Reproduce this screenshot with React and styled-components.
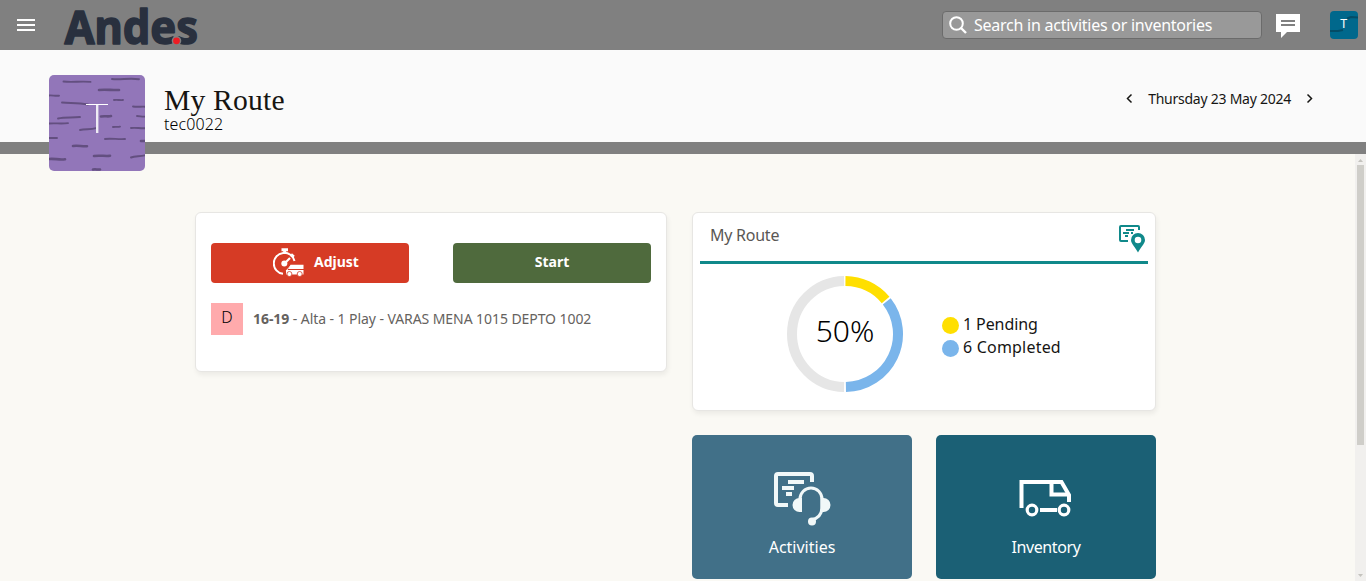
import React from 'react';
import styled, { createGlobalStyle } from 'styled-components';

const Global = createGlobalStyle`
  * { box-sizing: border-box; }
  html, body { margin: 0; padding: 0; overflow: hidden; }
  body { font-family: "Noto Sans", "Open Sans", sans-serif; color: #161513; }
  svg { display: block; flex: none; }
`;

const Page = styled.div`
  display: flex;
  flex-direction: column;
  height: 581px;
  background: #faf9f4;
`;

const Text = styled.span`
  display: block;
  white-space: nowrap;
  font-size: ${(p) => p.$size || 16}px;
  line-height: ${(p) => p.$line || 20}px;
  font-weight: ${(p) => p.$weight || 400};
  letter-spacing: ${(p) => p.$track || 0}px;
  color: ${(p) => p.$color || 'inherit'};
`;

const TopBar = styled.header`
  display: flex;
  align-items: center;
  flex: none;
  height: 50px;
  padding: 0 8px 0 17px;
  background: #808080;
`;

const Logo = styled.svg`
  margin-left: 28px;
  overflow: visible;
`;

const SearchBox = styled.div`
  display: flex;
  align-items: center;
  gap: 7px;
  width: 320px;
  height: 28px;
  margin-left: auto;
  padding-left: 6px;
  border: 1px solid #6b6b6b;
  border-radius: 4px;
  background: #999;
`;

const Chat = styled.svg`
  margin: 1px 30px 0 14px;
`;

const Header = styled.section`
  display: flex;
  flex: none;
  align-items: flex-start;
  height: 104px;
  padding: 25px 52px 0 49px;
  border-bottom: 12px solid #808080;
  background: #fafafa;
`;

const Titles = styled.div`
  margin-left: 19px;
  padding-top: 8px;
`;

const Title = styled.h1`
  margin: 0;
  font: 400 29.6px/34px "Liberation Serif", serif;
  letter-spacing: 0.2px;
  color: #161513;
  white-space: nowrap;
`;

const DateNav = styled.nav`
  display: flex;
  align-items: center;
  gap: 14px;
  margin: 14px 0 0 auto;
`;

const Body = styled.div`
  display: flex;
  flex: 1;
  min-height: 0;
`;

const Main = styled.main`
  display: flex;
  flex: 1;
  align-items: flex-start;
  gap: 25px;
  padding: 58px 0 0 195px;
`;

const Column = styled.div`
  display: flex;
  flex-direction: column;
  gap: 24px;
  width: ${(p) => p.$width}px;
`;

const Card = styled.section`
  height: ${(p) => p.$height}px;
  padding: ${(p) => p.$pad};
  border: 1px solid #e7e6e3;
  border-radius: 6px;
  background: #fff;
  box-shadow: 1px 3px 5px rgba(0, 0, 0, 0.06);
`;

const Actions = styled.div`
  display: flex;
  justify-content: space-between;
`;

const Button = styled.button`
  display: flex;
  align-items: center;
  justify-content: center;
  gap: 10px;
  width: 198px;
  height: 40px;
  padding: 0 0 2px ${(p) => p.$shift || 0}px;
  border: 0;
  border-radius: 4px;
  font-family: inherit;
  color: #fff;
  background: ${(p) => p.$bg};
`;

const ActivityRow = styled.div`
  display: flex;
  align-items: center;
  gap: 10px;
  margin-top: 20px;
`;

const Badge = styled.div`
  width: 32px;
  height: 32px;
  padding-top: 4px;
  text-align: center;
  background: #ffaaac;
`;

const CardHead = styled.div`
  display: flex;
  justify-content: space-between;
  height: 51px;
  padding: 12px 2px 0 10px;
  border-bottom: 3px solid #10898a;
`;

const ChartRow = styled.div`
  display: flex;
  align-items: center;
  gap: 38px;
  padding: 11px 0 0 86px;
`;

const Donut = styled.div`
  display: grid;
  place-items: center;
  width: 118px;
  height: 118px;
  & > * { grid-area: 1 / 1; }
`;

const Percent = styled(Text)`
  padding-bottom: 6px;
`;

const Legend = styled.div`
  display: flex;
  flex-direction: column;
  gap: 3px;
  padding-top: 2px;
`;

const LegendItem = styled.div`
  display: flex;
  align-items: center;
  gap: 4px;
  height: 20px;
`;

const Dot = styled.i`
  width: 17px;
  height: 17px;
  margin-top: 3px;
  border-radius: 50%;
  background: ${(p) => p.$color};
`;

const Tiles = styled.div`
  display: flex;
  gap: 24px;
`;

const Tile = styled.a`
  display: flex;
  flex-direction: column;
  align-items: center;
  width: 220px;
  height: 144px;
  padding-top: 32px;
  border-radius: 5px;
  background: ${(p) => p.$bg};
  color: #fff;
`;

const TileIcon = styled.svg`
  margin-bottom: 10px;
`;

const ScrollTrack = styled.div`
  display: flex;
  flex-direction: column;
  align-items: center;
  justify-content: space-between;
  width: 11px;
  padding: 5px 0 4px;
  background: #f1f0ee;
`;

const ScrollThumb = styled.div`
  width: 7px;
  height: 280px;
  margin: 3px 0 auto;
  background: #cfcec9;
`;

const barkMarks = [
  'M14.5 6.5c8 1 18-.5 27 .4', 'M63 4c8 .8 18-1 27 .2', 'M50 15c6-.8 14 .4 20 0', 'M0 20.5c3-.4 6 .6 10 .2',
  'M13 27.5c8 .8 16 0 26 2', 'M65 25c3-.6 6 .4 9 0', 'M84 31.5c4 .6 8 0 12 .2', 'M9 43.5c7-1.5 14-.6 22-1.5',
  'M52 41.5c4-.8 7 .4 10-.5', 'M88 41c3 0 5 1 8 .6', 'M0 48.5c6-.6 12 .5 19-.4', 'M31 55c5-1.4 10-.2 16-1.8',
  'M64 52c3-.4 5 .2 7-.4', 'M82 53c5-.6 9 .5 14 .2', 'M0 63h8', 'M56 64c6-1 13 .6 20 0', 'M24 71c5-.8 9 .6 14 .2',
  'M92 66h5', 'M0 84c5-.8 10 1.2 16 .3', 'M45 81c6-1 11 .5 16-.2', 'M82 82.5c4-1.6 9-.8 14-2.2', 'M44 94.5c3-.6 4 .3 7 0',
];
const thickMarks = [2, 8, 16, 17, 18, 19, 21];

function RouteAvatar() {
  return (
    <svg width="96" height="96" viewBox="0 0 96 96">
      <clipPath id="avatar"><rect width="96" height="96" rx="5" /></clipPath>
      <g clipPath="url(#avatar)">
        <rect width="96" height="96" fill="#9276b9" />
        {barkMarks.map((d, i) => (
          <path key={d} d={d} fill="none" stroke="#634f80" strokeWidth={thickMarks.includes(i) ? 2.6 : 1.9} strokeLinecap="round" />
        ))}
        <path d="M37 29.5h22" stroke="#fff" strokeWidth="1" />
        <path d="M48.2 30v28" stroke="#eeebf4" strokeWidth="2.4" />
      </g>
    </svg>
  );
}

function UserAvatar() {
  return (
    <svg width="28" height="28" viewBox="0 0 28 28">
      <clipPath id="user"><rect width="28" height="28" rx="4" /></clipPath>
      <g clipPath="url(#user)">
        <rect width="28" height="28" fill="#00688c" />
        <path d="M17 7.5l4-1.5 7 .5M0 20h8l5-1" fill="none" stroke="#044c66" strokeWidth="2" />
      </g>
      <text x="13.8" y="17" textAnchor="middle" fontFamily="Noto Sans, sans-serif" fontSize="12.5" fill="#fff">T</text>
    </svg>
  );
}

function AdjustIcon() {
  return (
    <svg width="31" height="29" viewBox="0 0 31 29" fill="none" stroke="#fff">
      <path d="M8.5 1.8h6.5M11.7 2v4M18 6.5l2.8 2.3" strokeWidth="3" />
      <path d="M10 25.8A10.5 10.5 0 1 1 21.5 13" strokeWidth="2" />
      <path d="M11 16l6-6" strokeWidth="2.2" />
      <circle cx="11.3" cy="15.5" r="3" fill="#fff" stroke="none" />
      <path d="M17.5 16.800h13v4.100h-15zM13 22h17.500v4.500H13z" fill="#fff" stroke="none" />
      <path d="M13.4 22.500l4.500-5" strokeWidth="1" />
      <circle cx="16.4" cy="26" r="2.5" fill="#fff" stroke="#d63b25" strokeWidth="0.8" />
      <circle cx="26.7" cy="26" r="2.5" fill="#fff" stroke="#d63b25" strokeWidth="0.8" />
    </svg>
  );
}

function RouteIcon() {
  return (
    <svg width="27" height="28" viewBox="0 0 27 28" fill="none" stroke="#10898a" strokeWidth="2">
      <path d="M20 5V2a1 1 0 0 0-1-1H2a1 1 0 0 0-1 1v13a1 1 0 0 0 1 1h7" />
      <path d="M7 5h8M4 8h6M12 8h2M6 11h3" />
      <path fillRule="evenodd" d="M19 8a7 7 0 0 1 7 7c0 3.8-4.5 7.2-7 12.6-2.5-5.4-7-8.8-7-12.6a7 7 0 0 1 7-7zm0 3.7a3.3 3.3 0 1 0 0 6.6 3.3 3.3 0 0 0 0-6.6z" fill="#10898a" stroke="none" />
    </svg>
  );
}

function ActivitiesIcon() {
  return (
    <TileIcon width="56" height="60" viewBox="0 0 56 60" overflow="visible" fill="none" stroke="#f1f8f8">
      <path d="M38 15V9a2 2 0 0 0-2-2H4a2 2 0 0 0-2 2v27a2 2 0 0 0 2 2h10" strokeWidth="4" />
      <path d="M14 15h16M8 21h12M12 27h6" strokeWidth="4" />
      <path d="M26 37V32a11 11 0 0 1 22 0v8c0 8-4.5 11.5-10.5 13" strokeWidth="3" />
      <path d="M28 31v14h-2.5a7 7 0 0 1 0-14zM46.5 31v14h3a7 7 0 0 0 0-14z" fill="#f1f8f8" stroke="none" />
      <circle cx="38" cy="54.500" r="4" fill="#f1f8f8" stroke="none" />
    </TileIcon>
  );
}

function TruckIcon() {
  return (
    <TileIcon width="54" height="60" viewBox="0 0 54 60" fill="none" stroke="#fff" strokeWidth="4">
      <path d="M2.5 41V15H42.5L50 28V35" />
      <path d="M32.5 15v12.5H48" />
      <path d="M21 43h17" />
      <circle cx="13" cy="43" r="4.8" strokeWidth="3.2" />
      <circle cx="45" cy="43" r="4.8" strokeWidth="3.2" />
    </TileIcon>
  );
}

const point = (r, deg) => {
  const a = ((deg - 90) * Math.PI) / 180;
  return `${59 + r * Math.cos(a)} ${59 + r * Math.sin(a)}`;
};
const arc = (from, to) => `M${point(53, from)}A53 53 0 0 1 ${point(53, to)}`;

function Chevron({ d }) {
  return <svg width="9" height="12" viewBox="0 0 9 12" fill="none" stroke="#161513" strokeWidth="1.5"><path d={d} /></svg>;
}

export default function App() {
  return (
    <Page>
      <Global />
      <TopBar>
        <svg width="18" height="12" viewBox="0 0 18 12" stroke="#fff" strokeWidth="2"><path d="M0 1h18M0 6h18M0 11h18" /></svg>
        <Logo width="137" height="50" viewBox="0 0 137 50">
          <text x="1.5" y="43.5" textLength="133.5" lengthAdjust="spacingAndGlyphs" fontFamily="Noto Sans, sans-serif" fontWeight="700" fontSize="46.5" fill="#29303e" stroke="#29303e" strokeWidth="1.6" strokeLinejoin="round">Andes</text>
          <circle cx="113.5" cy="40.8" r="4.8" fill="#808080" />
          <circle cx="113.5" cy="40.8" r="3.4" fill="#ed1c24" />
        </Logo>
        <SearchBox>
          <svg width="18" height="18" viewBox="0 0 18 18" fill="none" stroke="#fff" strokeWidth="2"><circle cx="7.5" cy="7.5" r="6.3" /><path d="M12 12l5 5" strokeWidth="2.4" /></svg>
          <Text $size={16} $track={-0.25} $color="#fff">Search in activities or inventories</Text>
        </SearchBox>
        <Chat width="24" height="24" viewBox="0 0 24 24"><path d="M0 0h24v18H11l-6 6v-6H0z" fill="#fff" /><path d="M5 7h14M5 11h14" stroke="#808080" strokeWidth="2" /></Chat>
        <UserAvatar />
      </TopBar>
      <Header>
        <RouteAvatar />
        <Titles>
          <Title>My Route</Title>
          <Text $size={16} $line={14} $track={0.1} $weight={300} $color="#000">tec0022</Text>
        </Titles>
        <DateNav>
          <Chevron d="M6.5 1.5L2.5 5.5L6.5 9.5" />
          <Text $size={14} $track={-0.25}>Thursday 23 May 2024</Text>
          <Chevron d="M2.5 1.5L6.5 5.5L2.5 9.5" />
        </DateNav>
      </Header>
      <Body>
        <Main>
          <Column $width={472}>
            <Card $height={160} $pad="30px 15px">
              <Actions>
                <Button $bg="#d63b25" $shift={12}><AdjustIcon /><Text $size={14} $weight={700}>Adjust</Text></Button>
                <Button $bg="#4f6a3d"><Text $size={14} $weight={700}>Start</Text></Button>
              </Actions>
              <ActivityRow>
                <Badge><Text $size={16} $weight={300} $color="#000">D</Text></Badge>
                <Text $size={14} $track={-0.07} $color="#65625e"><b>16-19</b> - Alta - 1 Play - VARAS MENA 1015 DEPTO 1002</Text>
              </ActivityRow>
            </Card>
          </Column>
          <Column $width={464}>
            <Card $height={199} $pad="0 7px">
              <CardHead><Text $size={16} $track={-0.25} $color="#5a5754">My Route</Text><RouteIcon /></CardHead>
              <ChartRow>
                <Donut>
                  <svg width="118" height="118" viewBox="0 0 118 118" fill="none" strokeWidth="10">
                    <path d={arc(181, 359)} stroke="#e6e6e6" />
                    <path d={arc(0.5, 50)} stroke="#ffdf00" />
                    <path d={arc(52, 179)} stroke="#7ab5eb" />
                  </svg>
                  <Percent $size={30} $line={34} $weight={300} $color="#000">50%</Percent>
                </Donut>
                <Legend>
                  <LegendItem><Dot $color="#ffdf00" /><Text $track={-0.1}>1 Pending</Text></LegendItem>
                  <LegendItem><Dot $color="#7ab5eb" /><Text $track={0.2}>6 Completed</Text></LegendItem>
                </Legend>
              </ChartRow>
            </Card>
            <Tiles>
              <Tile $bg="#417088"><ActivitiesIcon /><Text>Activities</Text></Tile>
              <Tile $bg="#1b6075"><TruckIcon /><Text $track={-0.4}>Inventory</Text></Tile>
            </Tiles>
          </Column>
        </Main>
        <ScrollTrack>
          <svg width="5" height="3" viewBox="0 0 5 3"><path d="M0 3L2.5 0L5 3z" fill="#c4c3be" /></svg>
          <ScrollThumb />
          <svg width="5" height="3" viewBox="0 0 5 3"><path d="M0 0L2.5 3L5 0z" fill="#c4c3be" /></svg>
        </ScrollTrack>
      </Body>
    </Page>
  );
}
